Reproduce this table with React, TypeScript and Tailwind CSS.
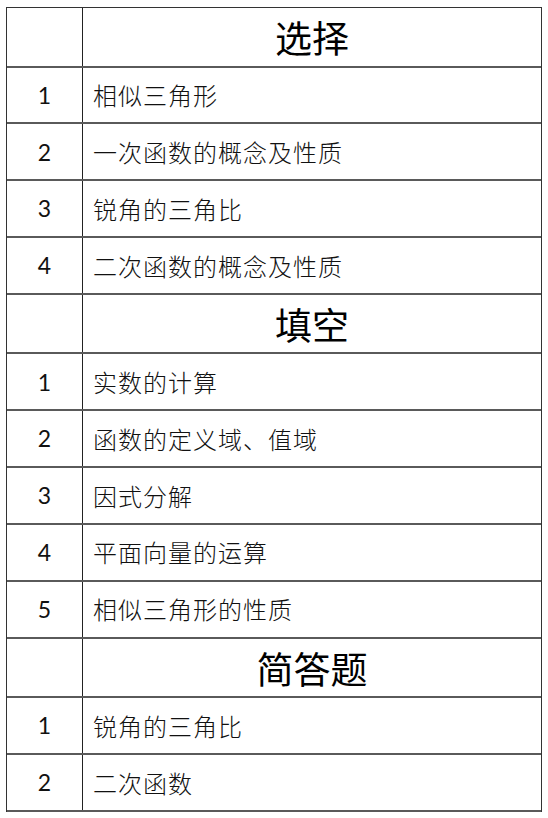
const sections: { title: string; items: string[] }[] = [
  { title: '选择', items: ['相似三角形', '一次函数的概念及性质', '锐角的三角比', '二次函数的概念及性质'] },
  { title: '填空', items: ['实数的计算', '函数的定义域、值域', '因式分解', '平面向量的运算', '相似三角形的性质'] },
  { title: '简答题', items: ['锐角的三角比', '二次函数'] },
];

const cjk = "font-['Noto_Sans_CJK_SC',sans-serif]";

function Row({ num, children, head }: { num?: string; children: React.ReactNode; head?: boolean }) {
  return (
    <div className="flex flex-1 border-b-2 border-[#5a5a5a]">
      <div className="flex w-[76px] items-center justify-center border-r border-[#222] font-['Lato','Liberation_Sans',sans-serif] text-[23px] text-[#111]">
        {num}
      </div>
      {head ? (
        <div className={`flex flex-1 items-center justify-center pt-[2px] text-[37px] font-normal text-black ${cjk}`}>
          {children}
        </div>
      ) : (
        <div className={`flex flex-1 items-center pl-[10px] text-[24px] font-light tracking-[1px] text-[#111] ${cjk}`}>
          {children}
        </div>
      )}
    </div>
  );
}

export default function App() {
  return (
    <div className="h-[818px] w-[548px] bg-white pl-[6px] pt-[7px]">
      <div className="flex h-[805px] w-[536px] flex-col border-x border-t border-[#333]">
        {sections.map((s) => (
          <div key={s.title} className="contents">
            <Row head>{s.title}</Row>
            {s.items.map((it, i) => (
              <Row key={it + i} num={String(i + 1)}>
                {it}
              </Row>
            ))}
          </div>
        ))}
      </div>
    </div>
  );
}
